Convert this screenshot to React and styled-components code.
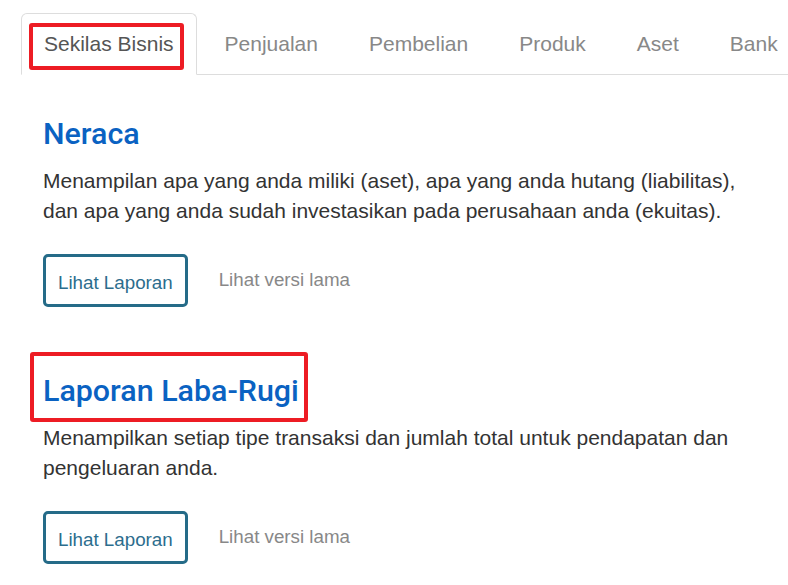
import React from "react";
import styled, { createGlobalStyle } from "styled-components";

const Global = createGlobalStyle`
  html, body {
    margin: 0;
    padding: 0;
    background: #fff;
    overflow: hidden;
  }
  body {
    font-family: "Liberation Sans", Arial, sans-serif;
    color: #333;
    -webkit-font-smoothing: antialiased;
  }
`;

const Page = styled.div`
  width: 788px;
  height: 585px;
  overflow: hidden;
  padding-top: 13px;
  box-sizing: border-box;
`;

const TabList = styled.ul`
  display: flex;
  flex-wrap: nowrap;
  list-style: none;
  margin: 0 0 0 21px;
  padding: 0;
  border-bottom: 1px solid #ddd;
  white-space: nowrap;
`;

const Tab = styled.li`
  position: relative;
  flex: none;
  margin: 0 5px -1px 0;
  padding: 15px 22px;
  font-size: 21px;
  line-height: 30px;
  color: ${(p) => (p.$active ? "#555" : "#888")};
  background: ${(p) => (p.$active ? "#fff" : "transparent")};
  border: 1px solid ${(p) => (p.$active ? "#ddd" : "transparent")};
  border-bottom-color: ${(p) => (p.$active ? "#fff" : "transparent")};
  border-radius: 6px 6px 0 0;
`;

const Annotation = styled.span`
  position: absolute;
  top: ${(p) => p.$t}px;
  left: ${(p) => p.$l}px;
  right: ${(p) => p.$r}px;
  bottom: ${(p) => p.$b}px;
  border: 4px solid #ed1c24;
  border-radius: 3px;
  pointer-events: none;
`;

const Content = styled.div`
  padding: 41px 0 0 43px;
  width: 715px;
`;

const Section = styled.section`
  margin-bottom: ${(p) => (p.$last ? 0 : 66)}px;
`;

const TitleWrap = styled.div`
  position: relative;
  display: inline-block;
`;

const Title = styled.h3`
  margin: 0;
  font-family: Roboto, "Liberation Sans", sans-serif;
  font-weight: 500;
  font-size: 30.4px;
  line-height: 35px;
  color: #0a62c2;
`;

const Desc = styled.p`
  margin: 15px 0 0;
  font-size: 21px;
  line-height: 30px;
  color: #333;
`;

const Actions = styled.div`
  display: flex;
  align-items: center;
  gap: 31px;
  margin-top: 28px;
`;

const ReportButton = styled.a`
  display: inline-block;
  box-sizing: border-box;
  height: 53px;
  padding: 12px 12px 8px;
  border: 3px solid #256b88;
  border-radius: 5px;
  font-size: 18.75px;
  line-height: 27px;
  color: #2c6d8d;
  text-decoration: none;
`;

const OldLink = styled.a`
  font-size: 18.75px;
  line-height: 27px;
  color: #888;
  text-decoration: none;
  margin-top: -2px;
`;

const tabs = ["Sekilas Bisnis", "Penjualan", "Pembelian", "Produk", "Aset", "Bank"];

const sections = [
  {
    title: "Neraca",
    desc: "Menampilan apa yang anda miliki (aset), apa yang anda hutang (liabilitas), dan apa yang anda sudah investasikan pada perusahaan anda (ekuitas).",
  },
  {
    title: "Laporan Laba-Rugi",
    desc: "Menampilkan setiap tipe transaksi dan jumlah total untuk pendapatan dan pengeluaran anda.",
    marked: true,
  },
];

export default function App() {
  return (
    <Page>
      <Global />
      <TabList>
        {tabs.map((t, i) => (
          <Tab key={t} $active={i === 0}>
            {t}
            {i === 0 && <Annotation $t={9} $l={7} $r={12} $b={4} />}
          </Tab>
        ))}
      </TabList>
      <Content>
        {sections.map((s, i) => (
          <Section key={s.title} $last={i === sections.length - 1}>
            <TitleWrap>
              <Title>{s.title}</Title>
              {s.marked && <Annotation $t={-21} $l={-13} $r={-9} $b={-14} />}
            </TitleWrap>
            <Desc>{s.desc}</Desc>
            <Actions>
              <ReportButton href="#">Lihat Laporan</ReportButton>
              <OldLink href="#">Lihat versi lama</OldLink>
            </Actions>
          </Section>
        ))}
      </Content>
    </Page>
  );
}
